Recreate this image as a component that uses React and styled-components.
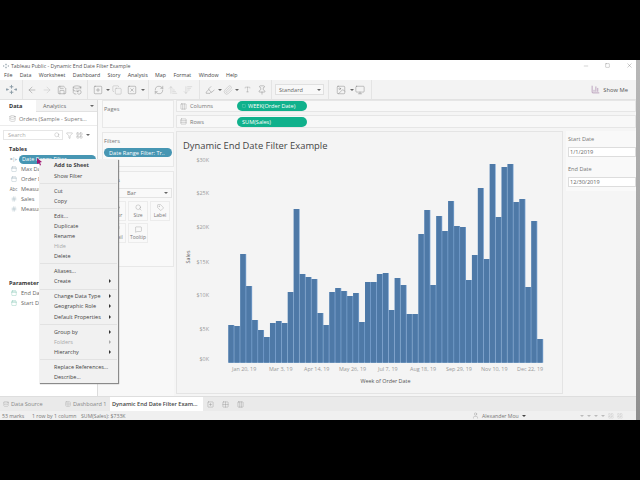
import React from "react";
import styled, { createGlobalStyle } from "styled-components";
import {
  ArrowLeft, ArrowRight, Save, DatabaseBackup, SquarePlus, Copy, SquareX, RefreshCw,
  ArrowUpNarrowWide, ArrowDownWideNarrow, Highlighter, Paperclip, Type, Pin, Image,
  Monitor, Minus, X, Search, Filter, LayoutGrid, Database, Calendar, Hash, Circle,
  Maximize2, MessageSquare, Tag, User, BarChart3, Columns3, Rows3, Grid2x2, Square,
} from "lucide-react";

const FONT = `"Open Sans", "Liberation Sans", sans-serif`;

const GlobalStyle = createGlobalStyle`
  html, body { margin: 0; background: #000; }
  * { box-sizing: border-box; }
  body { font-family: ${FONT}; }
`;

const Page = styled.div`
  width: 640px;
  height: 480px;
  padding: 60px 0;
  background: #000;
  overflow: hidden;
  position: relative;
`;

const Shell = styled.div`
  display: flex;
  height: 360px;
`;

const Strip = styled.div`
  width: 4px;
  background: linear-gradient(#b8b8b8, #8f8f8f);
`;

const Win = styled.div`
  width: 636px;
  height: 360px;
  display: flex;
  flex-direction: column;
  background: #f5f5f5;
  color: #555;
  font-size: 5.6px;
`;

const TitleBar = styled.div`
  height: 10px;
  padding: 1px 0 0 3px;
  display: flex;
  align-items: center;
  gap: 2px;
  background: #fff;
  color: #555;
  font-size: 5.2px;
`;

const WinButtons = styled.div`
  margin-left: auto;
  display: flex;
  align-items: center;
  gap: 16px;
  padding-right: 3px;
  color: #555;
`;

const MenuBar = styled.div`
  height: 10px;
  padding-left: 4px;
  display: flex;
  align-items: center;
  gap: 7.4px;
  background: #fff;
  color: #444;
  font-size: 5.3px;
`;

const Toolbar = styled.div`
  height: 20px;
  display: flex;
  align-items: center;
  background: #f3f3f3;
  border-bottom: 1px solid #e2e2e2;
  color: #777;
`;

const Tool = styled.span`
  width: ${(p) => p.$w || 15}px;
  height: 12px;
  display: flex;
  align-items: center;
  justify-content: center;
  color: ${(p) => p.$c || "#777"};
  font-size: 4px;
`;

const ToolSep = styled.span`
  width: 1px;
  height: 19px;
  margin: 0 ${(p) => p.$m ?? 3}px;
  background: #e4e4e4;
`;

const StandardSelect = styled.span`
  width: 49px;
  height: 11px;
  padding: 0 2px 0 3px;
  display: flex;
  align-items: center;
  justify-content: space-between;
  background: #f8f8f8;
  border: 1px solid #e0e0e0;
  color: #666;
  font-size: 5.6px;
`;

const ShowMe = styled.span`
  margin-left: auto;
  padding-right: 8px;
  display: flex;
  align-items: center;
  gap: 3px;
  color: #555;
  font-size: 5.8px;
`;

const Main = styled.div`
  flex: 1;
  min-height: 0;
  display: flex;
`;

const DataPane = styled.div`
  width: 98px;
  background: #fff;
  border-right: 1px solid #dcdcdc;
  display: flex;
  flex-direction: column;
`;

const PaneTabs = styled.div`
  height: 12px;
  display: flex;
  align-items: center;
`;

const PaneTab = styled.span`
  height: 12px;
  width: ${(p) => p.$w}px;
  padding-left: ${(p) => p.$pad}px;
  display: flex;
  align-items: center;
  justify-content: space-between;
  padding-right: 3px;
  background: ${(p) => (p.$active ? "#fff" : "#f3f3f3")};
  font-weight: ${(p) => (p.$active ? 700 : 400)};
  color: ${(p) => (p.$active ? "#333" : "#666")};
  border-bottom: 1px solid ${(p) => (p.$active ? "#fff" : "#e2e2e2")};
`;

const SourceRow = styled.div`
  height: 14px;
  padding-left: 9px;
  display: flex;
  align-items: center;
  gap: 3px;
  color: #777;
  border-bottom: 1px solid #ececec;
`;

const SearchRow = styled.div`
  height: 15px;
  padding: 3px 4px 0 3px;
  display: flex;
  align-items: center;
  gap: 3px;
  color: #777;
`;

const SearchBox = styled.div`
  width: 60px;
  height: 10px;
  padding: 0 2px 0 4px;
  display: flex;
  align-items: center;
  justify-content: space-between;
  background: #fff;
  border: 1px solid #e6e6e6;
  color: #aaa;
`;

const SectionHead = styled.div`
  padding-left: 9px;
  height: 11px;
  margin-top: ${(p) => p.$top || 0}px;
  display: flex;
  align-items: center;
  font-weight: 700;
  color: #333;
`;

const FieldRow = styled.div`
  height: 10px;
  padding-left: 10px;
  display: flex;
  align-items: center;
  gap: 4px;
  color: #666;
  white-space: nowrap;
`;

const FieldIcon = styled.span`
  width: 7px;
  display: flex;
  justify-content: center;
  color: ${(p) => p.$c || "#6f8f9c"};
  font-size: 4.4px;
`;

const FieldPill = styled.span`
  flex: 1;
  height: 9px;
  margin-right: 1px;
  margin-left: -2px;
  padding-left: 3px;
  display: flex;
  align-items: center;
  border-radius: 5px;
  background: #4796b3;
  color: #fff;
`;

const SidePane = styled.div`
  width: 76px;
  padding: 0 0 0 4px;
  display: flex;
  flex-direction: column;
  gap: 4px;
  background: #f8f8f8;
`;

const Card = styled.div`
  height: ${(p) => p.$h}px;
  padding: 4px 1px 0;
  background: #f9f9f9;
  border: 1px solid #e8e8e8;
  color: #777;
`;

const FilterPill = styled.div`
  height: 9px;
  margin-top: 3px;
  padding-left: 5px;
  display: flex;
  align-items: center;
  border-radius: 5px;
  background: #4796b3;
  color: #fff;
  white-space: nowrap;
  overflow: hidden;
`;

const MarkSelect = styled.div`
  height: 10px;
  margin-top: 4px;
  padding: 0 3px 0 22px;
  display: flex;
  align-items: center;
  justify-content: space-between;
  background: #f9f9f9;
  border: 1px solid #e4e4e4;
`;

const MarkGrid = styled.div`
  margin: 3px 0 0 2px;
  display: grid;
  grid-template-columns: repeat(3, 20px);
  grid-auto-rows: 20px;
  gap: 2px;
`;

const MarkButton = styled.div`
  display: flex;
  flex-direction: column;
  align-items: center;
  justify-content: center;
  gap: 1px;
  border: 1px solid #ececec;
  color: #777;
  font-size: 5px;
`;

const Center = styled.div`
  flex: 1;
  min-width: 0;
  padding-left: 2px;
  display: flex;
  flex-direction: column;
  gap: 3px;
`;

const Shelf = styled.div`
  height: ${(p) => p.$h}px;
  padding-left: 3px;
  display: flex;
  align-items: center;
  background: #f8f8f8;
  border: 1px solid #e6e6e6;
  color: #777;
`;

const ShelfLabel = styled.span`
  width: 57px;
  display: flex;
  align-items: center;
  gap: 3px;
`;

const GreenPill = styled.span`
  width: 70px;
  height: 10px;
  padding-left: ${(p) => p.$pad}px;
  display: flex;
  align-items: center;
  gap: 2px;
  border-radius: 5px;
  background: #10b18c;
  color: #fff;
`;

const Workspace = styled.div`
  flex: 1;
  min-height: 0;
  display: flex;
  gap: 3px;
  padding-bottom: 2px;
`;

const View = styled.div`
  width: 387px;
  padding: 7px 0 0 6px;
  background: #f4f4f4;
  border: 1px solid #e4e4e4;
`;

const ViewTitle = styled.div`
  height: 12px;
  display: flex;
  align-items: center;
  color: #444;
  font-size: 9.4px;
`;

const ChartSvg = styled.svg`
  display: block;
  margin-left: -6px;
`;

const Legend = styled.div`
  flex: 1;
  display: flex;
  flex-direction: column;
`;

const ParamCard = styled.div`
  height: 30px;
  padding: 4px 0 0 2px;
  display: flex;
  flex-direction: column;
  gap: 4px;
  color: #777;
  background: #f9f9f9;
`;

const ParamInput = styled.div`
  height: 10px;
  padding-left: 1px;
  display: flex;
  align-items: center;
  background: #fff;
  border: 1px solid #ddd;
  color: #666;
`;

const TabBar = styled.div`
  height: 15px;
  display: flex;
  align-items: center;
  background: #eaeaea;
  border-top: 1px solid #dedede;
  color: #8a8a8a;
`;

const SheetTab = styled.span`
  width: ${(p) => p.$w}px;
  height: 14px;
  padding-left: ${(p) => p.$pad || 0}px;
  display: flex;
  align-items: center;
  gap: 2px;
  white-space: nowrap;
  background: ${(p) => (p.$active ? "#fff" : "transparent")};
  color: ${(p) => (p.$active ? "#444" : "#888")};
  font-weight: ${(p) => (p.$active ? 600 : 400)};
`;

const StatusBar = styled.div`
  height: 9px;
  padding-left: 2px;
  display: flex;
  align-items: center;
  background: #f0f0f0;
  color: #777;
  font-size: 5.2px;
`;

const StatusItem = styled.span`
  width: ${(p) => p.$w}px;
  white-space: nowrap;
`;

const UserBlock = styled.span`
  width: 108px;
  margin-left: ${(p) => p.$left}px;
  display: flex;
  align-items: center;
  gap: 3px;
`;

const Pager = styled.span`
  display: flex;
  align-items: center;
  gap: 3px;
  color: #bbb;
`;

const ContextMenu = styled.div`
  position: absolute;
  left: 39px;
  top: 159px;
  width: 79px;
  padding: 1.4px 0 1px;
  background: #f1f1f1;
  box-shadow: 1px 1px 1px #8a8a8a;
  color: #444;
  font-size: 5.5px;
`;

const MenuItem = styled.div`
  height: 10.2px;
  padding: 0 7px 0 15px;
  display: flex;
  align-items: center;
  justify-content: space-between;
  white-space: nowrap;
  font-weight: ${(p) => (p.$bold ? 700 : 400)};
  color: ${(p) => (p.$off ? "#aaa" : "#444")};
`;

const MenuSep = styled.div`
  height: 1px;
  margin: 2px 1px 1.7px;
  background: #e2e2e2;
`;

const Arrow = styled.span`
  width: 0;
  height: 0;
  border-left: 2.5px solid ${(p) => (p.$off ? "#aaa" : "#333")};
  border-top: 2px solid transparent;
  border-bottom: 2px solid transparent;
`;

const Caret = styled.span`
  width: 0;
  height: 0;
  border-top: 2.4px solid ${(p) => p.$c || "#666"};
  border-left: 2px solid transparent;
  border-right: 2px solid transparent;
`;

const Cursor = styled.svg`
  position: absolute;
  left: 37px;
  top: 158px;
`;

const ic = { size: 10, strokeWidth: 1 };
const sm = { size: 7, strokeWidth: 1 };

const SALES_TOPS = [
  325, 326, 254, 286, 320, 330, 337, 323, 321, 323, 292, 209, 274, 277, 279, 313, 325, 292, 288, 291,
  296, 293, 322, 282, 282, 274, 273, 310, 278, 285, 314, 314, 234, 210, 285, 216, 231, 201, 226, 227,
  280, 255, 188, 259, 164, 217, 167, 164, 202, 199, 287, 221, 339,
];

const Y_TICKS = [["$30K", 160], ["$25K", 193], ["$20K", 227], ["$15K", 262], ["$10K", 295], ["$5K", 329], ["$0K", 359]];
const X_TICKS = [["Jan 20, 19", 232], ["Mar 3, 19", 269], ["Apr 14, 19", 304], ["May 26, 19", 339], ["Jul 7, 19", 378], ["Aug 18, 19", 410], ["Sep 29, 19", 446], ["Nov 10, 19", 481], ["Dec 22, 19", 517]];

// chart coords are page coords, shifted by the svg origin
const OX = 177;
const OY = 151;

function SalesChart() {
  return (
    <ChartSvg width={385} height={238} viewBox={`${OX} ${OY} 385 238`}>
      {SALES_TOPS.map((top, i) => (
        <rect key={i} x={228.4 + i * 5.94} y={top} width={5.94} height={362.7 - top} fill="#7aa3d1" />
      ))}
      {SALES_TOPS.map((top, i) => (
        <rect key={i} x={228.4 + i * 5.94} y={top} width={5.2} height={362.7 - top} fill="#4e79a7" />
      ))}
      {Y_TICKS.map(([label, y]) => (
        <text key={label} x={209} y={y + 2} textAnchor="end" fontSize="5.4" fill="#999" fontFamily={FONT}>{label}</text>
      ))}
      {X_TICKS.map(([label, x]) => (
        <text key={label} x={x} y={371} fontSize="5.4" fill="#999" fontFamily={FONT}>{label}</text>
      ))}
      <text x={385.5} y={383} textAnchor="middle" fontSize="5.4" fill="#555" fontFamily={FONT}>Week of Order Date</text>
      <text transform="translate(190 257) rotate(-90)" textAnchor="middle" fontSize="5.4" fill="#555" fontFamily={FONT}>Sales</text>
    </ChartSvg>
  );
}

function TableauMark({ size = 11 }) {
  return (
    <svg width={size} height={size} viewBox="0 0 12 12" stroke="#8a9aa5" strokeWidth="1" fill="none">
      <path d="M6 1v4M4 3h4M6 7v4M4 9h4M1 4.5v3M0 6h3M11 4.5v3M9 6h3" />
    </svg>
  );
}

const MENU = [
  [["Add to Sheet", { bold: true }], ["Show Filter"]],
  [["Cut"], ["Copy"]],
  [["Edit..."], ["Duplicate"], ["Rename"], ["Hide", { off: true }], ["Delete"]],
  [["Aliases..."], ["Create", { arrow: true }]],
  [["Change Data Type", { arrow: true }], ["Geographic Role", { arrow: true }], ["Default Properties", { arrow: true }]],
  [["Group by", { arrow: true }], ["Folders", { arrow: true, off: true }], ["Hierarchy", { arrow: true }]],
  [["Replace References..."], ["Describe..."]],
];

export default function App() {
  return (
    <Page>
      <GlobalStyle />
      <Shell>
        <Win>
          <TitleBar>
            <TableauMark size={6} />
            <span>Tableau Public - Dynamic End Date Filter Example</span>
            <WinButtons>
              <Minus size={6} strokeWidth={1} />
              <Square size={5} strokeWidth={1.2} />
              <X size={7} strokeWidth={1} />
            </WinButtons>
          </TitleBar>
          <MenuBar>
            {["File", "Data", "Worksheet", "Dashboard", "Story", "Analysis", "Map", "Format", "Window", "Help"].map((m) => (
              <span key={m}>{m}</span>
            ))}
          </MenuBar>
          <Toolbar>
            <Tool $w={22}><TableauMark /></Tool>
            <ToolSep $m={0} />
            <Tool $w={17}><ArrowLeft {...ic} /></Tool>
            <Tool $w={14} $c="#bbb"><ArrowRight {...ic} /></Tool>
            <Tool $w={16}><Save {...ic} /></Tool>
            <Tool $w={14}><DatabaseBackup {...ic} /></Tool>
            <ToolSep />
            <Tool $w={14}><SquarePlus {...ic} /></Tool>
            <Tool $w={5}><Caret /></Tool>
            <Tool $w={14} $c="#aaa"><Copy {...ic} /></Tool>
            <Tool $w={16}><SquareX {...ic} /></Tool>
            <Tool $w={5}><Caret /></Tool>
            <ToolSep />
            <Tool $w={14}><RefreshCw {...ic} /></Tool>
            <Tool $w={14} $c="#bbb"><ArrowUpNarrowWide {...ic} /></Tool>
            <Tool $w={16} $c="#bbb"><ArrowDownWideNarrow {...ic} /></Tool>
            <ToolSep />
            <Tool $w={14}><Highlighter {...ic} /></Tool>
            <Tool $w={5}><Caret /></Tool>
            <Tool $w={12} $c="#aaa"><Paperclip {...ic} /></Tool>
            <Tool $w={5}><Caret /></Tool>
            <Tool $w={16}><Type {...sm} /></Tool>
            <Tool $w={13}><Pin {...ic} /></Tool>
            <ToolSep />
            <StandardSelect>Standard<Caret /></StandardSelect>
            <ToolSep $m={4} />
            <Tool $w={16}><Image {...ic} /></Tool>
            <Tool $w={5}><Caret /></Tool>
            <Tool $w={12}><Monitor {...ic} /></Tool>
            <ToolSep $m={5} />
            <ShowMe><BarChart3 size={9} strokeWidth={1.4} color="#8b5c8f" />Show Me</ShowMe>
          </Toolbar>
          <Main>
            <DataPane>
              <PaneTabs>
                <PaneTab $active $w={36} $pad={9}>Data</PaneTab>
                <PaneTab $w={61} $pad={7}>Analytics<Caret /></PaneTab>
              </PaneTabs>
              <SourceRow><Database {...sm} />Orders (Sample - Supers...</SourceRow>
              <SearchRow>
                <SearchBox>Search<Search size={6} strokeWidth={1} color="#777" /></SearchBox>
                <Filter {...sm} />
                <LayoutGrid {...sm} />
                <Caret />
              </SearchRow>
              <SectionHead $top={2}>Tables</SectionHead>
              <FieldRow>
                <FieldIcon>=|⊧</FieldIcon>
                <FieldPill>Date Range Filter</FieldPill>
              </FieldRow>
              <FieldRow><FieldIcon><Calendar size={6} strokeWidth={1} /></FieldIcon>Max Date</FieldRow>
              <FieldRow><FieldIcon><Calendar size={6} strokeWidth={1} /></FieldIcon>Order Date</FieldRow>
              <FieldRow><FieldIcon $c="#666">Abc</FieldIcon>Measure Names</FieldRow>
              <FieldRow><FieldIcon><Hash size={6} strokeWidth={1} /></FieldIcon>Sales</FieldRow>
              <FieldRow><FieldIcon><Hash size={6} strokeWidth={1} /></FieldIcon>Measure Values</FieldRow>
              <SectionHead $top={63}>Parameters</SectionHead>
              <FieldRow><FieldIcon $c="#3ea58a"><Calendar size={6} strokeWidth={1} /></FieldIcon>End Date</FieldRow>
              <FieldRow><FieldIcon $c="#3ea58a"><Calendar size={6} strokeWidth={1} /></FieldIcon>Start Date</FieldRow>
            </DataPane>
            <SidePane>
              <Card $h={28}>Pages</Card>
              <Card $h={35}>
                Filters
                <FilterPill>Date Range Filter: Tr..</FilterPill>
              </Card>
              <Card $h={96}>
                Marks
                <MarkSelect>Bar<Caret /></MarkSelect>
                <MarkGrid>
                  <MarkButton><Circle {...sm} />Color</MarkButton>
                  <MarkButton><Search {...sm} />Size</MarkButton>
                  <MarkButton><Tag {...sm} />Label</MarkButton>
                  <MarkButton><Maximize2 {...sm} />Detail</MarkButton>
                  <MarkButton><MessageSquare {...sm} />Tooltip</MarkButton>
                </MarkGrid>
              </Card>
            </SidePane>
            <Center>
              <Shelf $h={12}>
                <ShelfLabel><Columns3 {...sm} />Columns</ShelfLabel>
                <GreenPill $pad={5}><Square size={4} strokeWidth={1} />WEEK(Order Date)</GreenPill>
              </Shelf>
              <Shelf $h={13}>
                <ShelfLabel><Rows3 {...sm} />Rows</ShelfLabel>
                <GreenPill $pad={5}>SUM(Sales)</GreenPill>
              </Shelf>
              <Workspace>
                <View>
                  <ViewTitle>Dynamic End Date Filter Example</ViewTitle>
                  <SalesChart />
                </View>
                <Legend>
                  <ParamCard>
                    Start Date
                    <ParamInput>1/1/2019</ParamInput>
                  </ParamCard>
                  <ParamCard>
                    End Date
                    <ParamInput>12/30/2019</ParamInput>
                  </ParamCard>
                </Legend>
              </Workspace>
            </Center>
          </Main>
          <TabBar>
            <SheetTab $w={61} $pad={3}><Database size={6} strokeWidth={1} />Data Source</SheetTab>
            <SheetTab $w={49} $pad={4}><Grid2x2 size={6} strokeWidth={1} />Dashboard 1</SheetTab>
            <SheetTab $active $w={93} $pad={2}>Dynamic End Date Filter Exam...</SheetTab>
            <Tool $w={15}><SquarePlus {...sm} /></Tool>
            <Tool $w={15}><Grid2x2 {...sm} /></Tool>
            <Tool $w={15}><Columns3 {...sm} /></Tool>
          </TabBar>
          <StatusBar>
            <StatusItem $w={30}>53 marks</StatusItem>
            <StatusItem $w={49}>1 row by 1 column</StatusItem>
            <StatusItem $w={60}>SUM(Sales): $733K</StatusItem>
            <UserBlock $left={331}><User size={7} strokeWidth={1} />Alexander Mou<Caret $c="#444" /></UserBlock>
            <Pager>
              <Caret $c="#bbb" /><Caret $c="#bbb" /><Caret $c="#bbb" /><Caret $c="#bbb" />
              <LayoutGrid size={6} strokeWidth={1} />
              <LayoutGrid size={6} strokeWidth={1} />
            </Pager>
          </StatusBar>
        </Win>
        <Strip />
      </Shell>
      <ContextMenu>
        {MENU.map((group, g) => (
          <React.Fragment key={g}>
            {g > 0 && <MenuSep />}
            {group.map(([label, o = {}]) => (
              <MenuItem key={label} $bold={o.bold} $off={o.off}>
                {label}
                {o.arrow && <Arrow $off={o.off} />}
              </MenuItem>
            ))}
          </React.Fragment>
        ))}
      </ContextMenu>
      <Cursor width="6" height="8" viewBox="0 0 6 8">
        <path d="M0 0l5 4-2 .4L4 7 3 7.4 2 5 0 6z" fill="#a01672" />
      </Cursor>
    </Page>
  );
}
